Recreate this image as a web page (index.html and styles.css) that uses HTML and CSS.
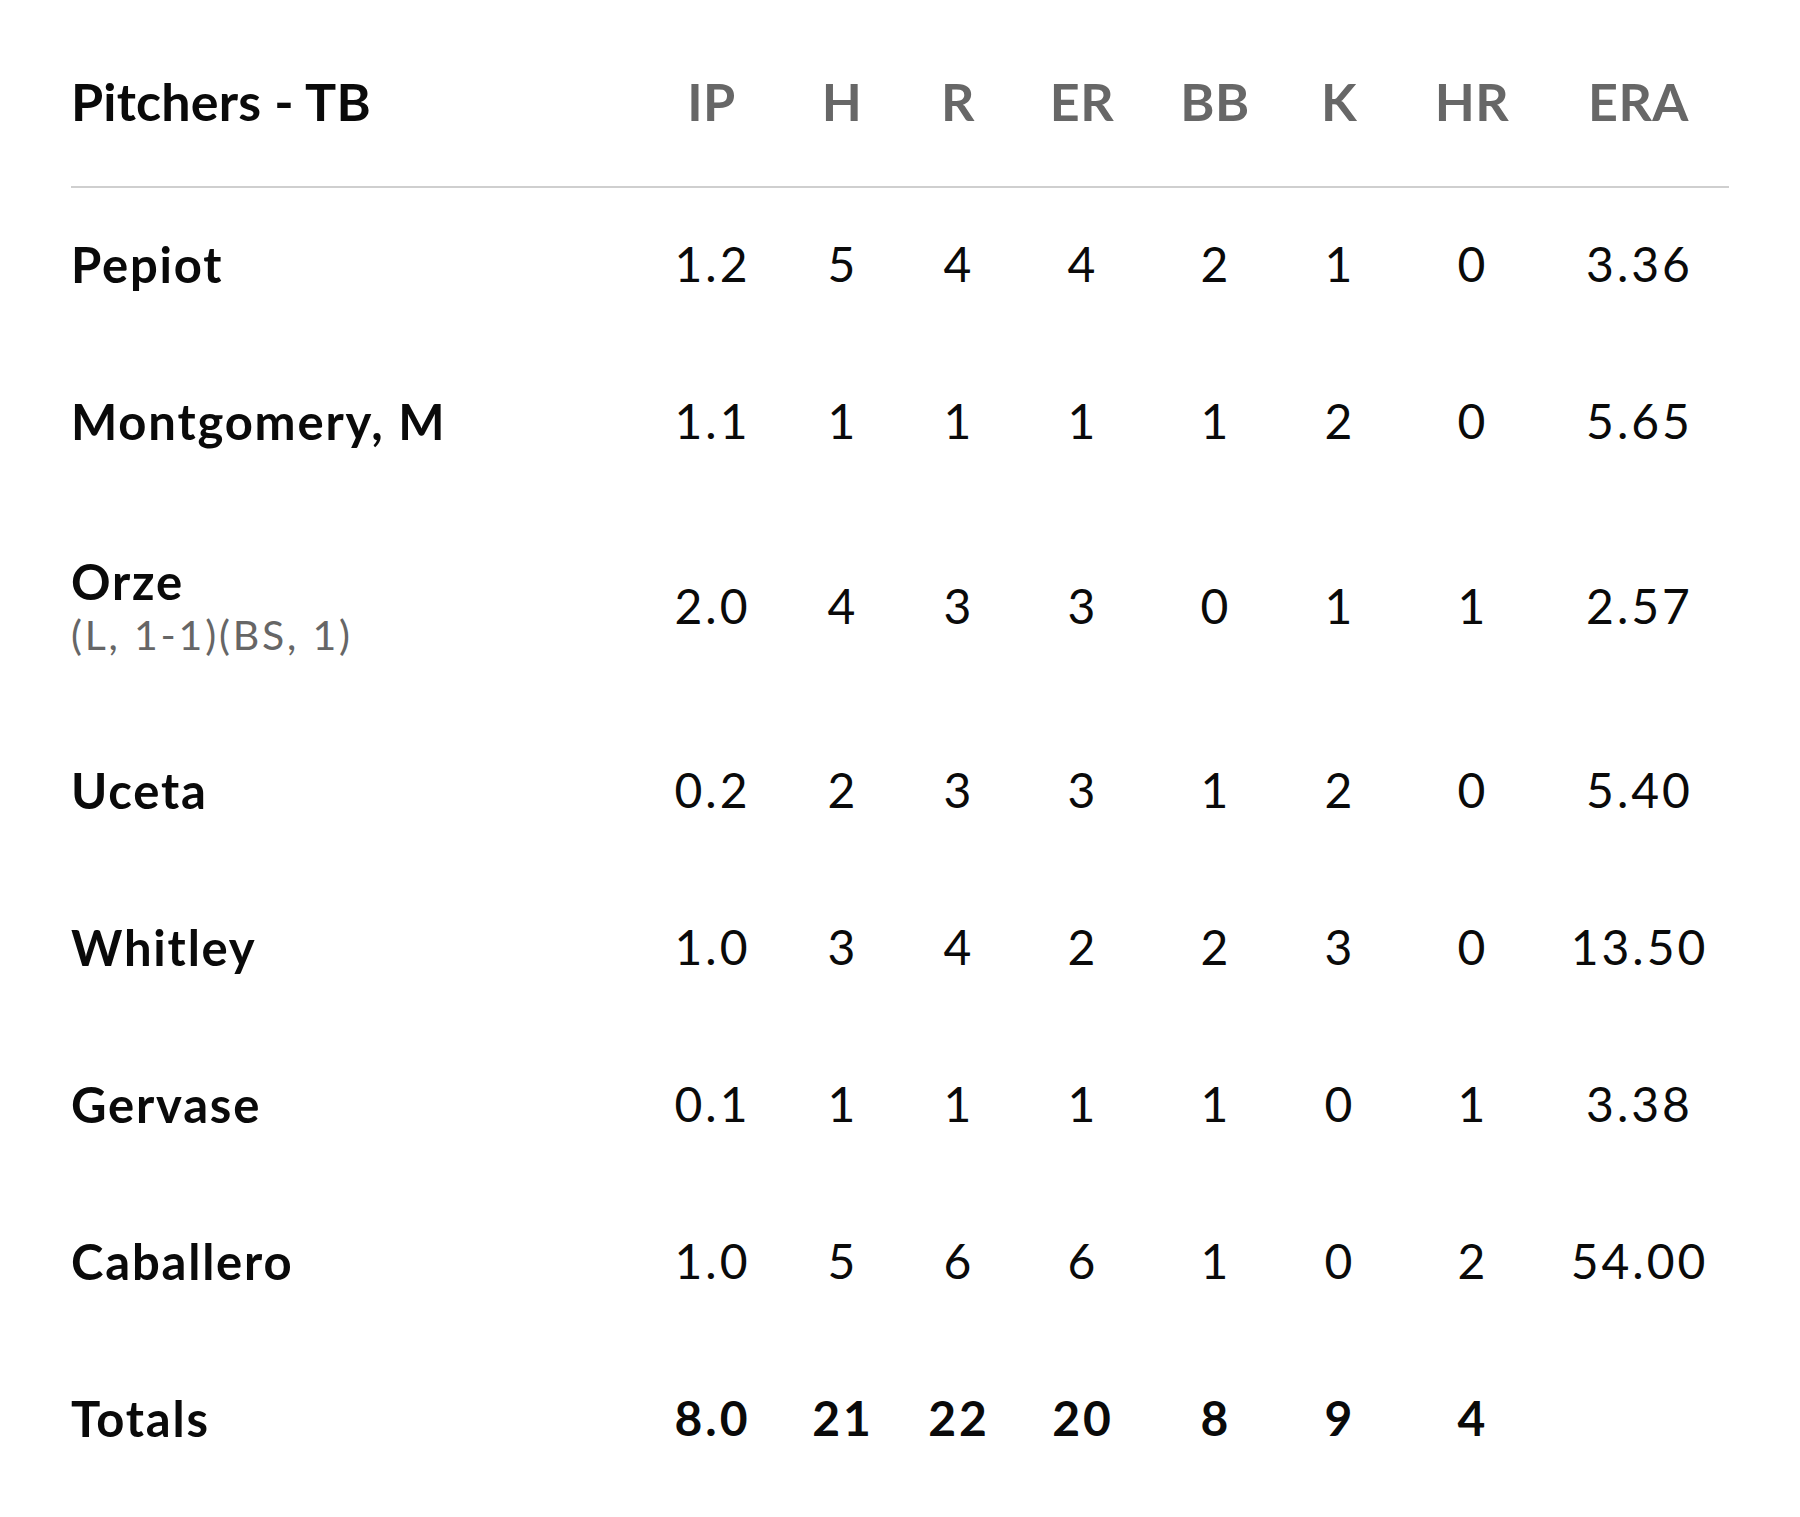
FILE: index.html
```html
<!DOCTYPE html>
<html>
<head>
<meta charset="utf-8">
<link rel="stylesheet" href="styles.css">
</head>
<body>
<div class="box">
  <div class="row head">
    <div class="name">Pitchers - TB</div>
    <div>IP</div><div>H</div><div>R</div><div>ER</div><div>BB</div><div>K</div><div>HR</div><div>ERA</div>
  </div>
  <div class="row">
    <div class="name">Pepiot</div>
    <div>1.2</div><div>5</div><div>4</div><div>4</div><div>2</div><div>1</div><div>0</div><div>3.36</div>
  </div>
  <div class="row">
    <div class="name">Montgomery, M</div>
    <div>1.1</div><div>1</div><div>1</div><div>1</div><div>1</div><div>2</div><div>0</div><div>5.65</div>
  </div>
  <div class="row tall">
    <div class="name">Orze<span class="note">(L, 1-1)(BS, 1)</span></div>
    <div>2.0</div><div>4</div><div>3</div><div>3</div><div>0</div><div>1</div><div>1</div><div>2.57</div>
  </div>
  <div class="row">
    <div class="name">Uceta</div>
    <div>0.2</div><div>2</div><div>3</div><div>3</div><div>1</div><div>2</div><div>0</div><div>5.40</div>
  </div>
  <div class="row">
    <div class="name">Whitley</div>
    <div>1.0</div><div>3</div><div>4</div><div>2</div><div>2</div><div>3</div><div>0</div><div>13.50</div>
  </div>
  <div class="row">
    <div class="name">Gervase</div>
    <div>0.1</div><div>1</div><div>1</div><div>1</div><div>1</div><div>0</div><div>1</div><div>3.38</div>
  </div>
  <div class="row">
    <div class="name">Caballero</div>
    <div>1.0</div><div>5</div><div>6</div><div>6</div><div>1</div><div>0</div><div>2</div><div>54.00</div>
  </div>
  <div class="row total">
    <div class="name">Totals</div>
    <div>8.0</div><div>21</div><div>22</div><div>20</div><div>8</div><div>9</div><div>4</div><div></div>
  </div>
</div>
</body>
</html>
```

FILE: styles.css
```css
html, body {
  margin: 0;
  padding: 0;
  background: #fff;
}
body {
  font-family: "Lato", "Liberation Sans", sans-serif;
  color: #0a0a0a;
}
.box {
  padding: 21px 71px 0 71px;
  width: 1658px;
}
.row {
  box-sizing: border-box;
  display: grid;
  grid-template-columns: 575px 130px 131px 101px 147px 119px 129px 137px 196px;
  align-items: center;
  height: 157px;
  padding-bottom: 6px;
  font-size: 48px;
  letter-spacing: 3px;
}
.row > div {
  text-align: center;
  padding-left: 3px;
}
.row > .name {
  text-align: left;
  padding-left: 0;
  font-weight: 700;
  font-size: 49px;
  letter-spacing: 1.8px;
  display: flex;
  flex-direction: column;
}
.head {
  height: 167px;
  padding-bottom: 5px;
  border-bottom: 2px solid #cfcfcf;
  font-size: 52px;
  font-weight: 700;
  color: #676767;
  letter-spacing: 0.5px;
}
.head > div {
  padding-left: 1px;
}
.head > .name {
  color: #0a0a0a;
  font-size: 52px;
  letter-spacing: 0.2px;
}
.tall {
  height: 212px;
}
.note {
  font-size: 41px;
  font-weight: 400;
  color: #666;
  letter-spacing: 2.8px;
  margin-top: 0;
}
.total {
  font-weight: 700;
}
```
